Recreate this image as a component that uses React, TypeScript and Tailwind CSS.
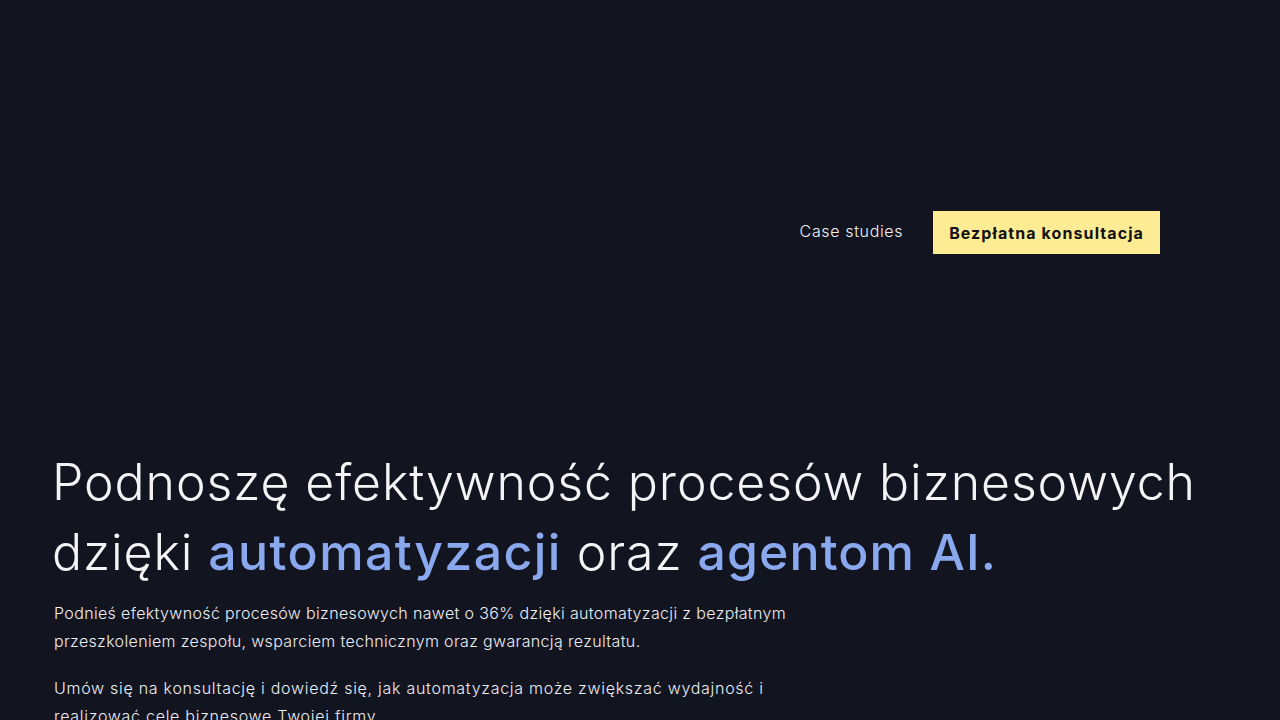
export default function App() {
  return (
    <div className="min-h-screen w-full bg-[#121420] text-white font-['Inter','Liberation_Sans',sans-serif]">
      {/* Navigation */}
      <header className="flex justify-end items-center pt-[211px] pr-[120px]">
        <nav className="flex items-center gap-[30px]">
          <a href="#" className="-mt-[4px] text-[16px] font-light text-[#f1f1f4] tracking-[0.04em]">
            Case studies
          </a>
          <a
            href="#"
            className="flex items-center h-[43px] px-[16px] bg-[#fdec93] text-[#111111] text-[16px] font-bold tracking-[0.068em]"
          >
            Bezpłatna konsultacja
          </a>
        </nav>
      </header>

      {/* Hero */}
      <section className="pl-[52px] pt-[193px]">
        <h1 className="text-[50px] leading-[70px] font-light text-[#f4f4f6] tracking-[0.018em]">
          Podnoszę efektywność procesów biznesowych
          <br />
          dzięki <span className="font-medium tracking-[0.028em] text-[#8aa8ee]">automatyzacji</span> oraz{" "}
          <span className="font-medium tracking-[0.022em] text-[#8aa8ee]">agentom AI.</span>
        </h1>
        <div className="pl-[2px] mt-[12px] max-w-[800px] text-[16px] leading-[28px] font-light text-[#eceef2] tracking-[0.022em]">
          <p>
            Podnieś efektywność procesów biznesowych nawet o 36% dzięki automatyzacji z bezpłatnym
            <br />
            przeszkoleniem zespołu, wsparciem technicznym oraz gwarancją rezultatu.
          </p>
          <p className="mt-[19px] tracking-[0.045em]">
            Umów się na konsultację i dowiedź się, jak automatyzacja może zwiększać wydajność i
            <br />
            realizować cele biznesowe Twojej firmy.
          </p>
        </div>
      </section>
    </div>
  );
}
